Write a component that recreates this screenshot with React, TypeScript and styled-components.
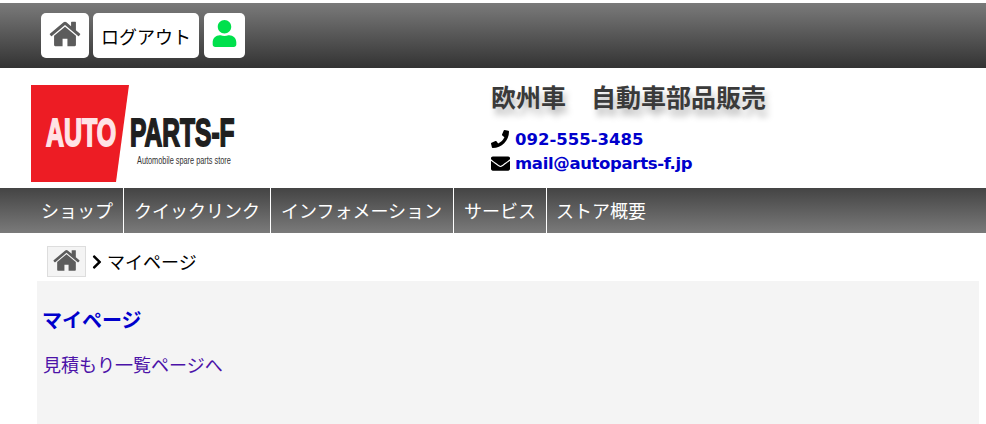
import React from "react";
import styled, { createGlobalStyle } from "styled-components";
import { FaUser, FaPhone, FaEnvelope, FaChevronRight } from "react-icons/fa";

const Global = createGlobalStyle`
  html, body { margin: 0; padding: 0; background: #fff; overflow: hidden; }
  body { font-family: "Noto Sans CJK JP", "Liberation Sans", sans-serif; color: #000; }
`;

const Page = styled.div`
  width: 986px;
  height: 424px;
  padding-top: 3px;
  box-sizing: border-box;
  overflow: hidden;
`;

const TopBar = styled.div`
  height: 65px;
  box-sizing: border-box;
  padding: 10px 0 0 41px;
  display: flex;
  align-items: flex-start;
  gap: 4px;
  background: linear-gradient(#7a7a7a, #333333);
`;

const TopButton = styled.a<{ $w: number; $ml?: number; $pb?: number; $pt?: number }>`
  width: ${(p) => p.$w}px;
  height: 45px;
  box-sizing: border-box;
  margin-left: ${(p) => p.$ml ?? 0}px;
  padding-bottom: ${(p) => p.$pb ?? 0}px;
  padding-top: ${(p) => p.$pt ?? 0}px;
  background: #fff;
  border-radius: 5px;
  display: flex;
  align-items: center;
  justify-content: center;
  font-size: 18px;
  color: #000;
`;

const Header = styled.div`
  height: 120px;
  display: flex;
  align-items: flex-start;
`;

const LogoBox = styled.div`
  width: 491px;
  padding: 17px 0 0 31px;
  box-sizing: border-box;
  svg { display: block; }
`;

const Contact = styled.div`
  padding-top: 10px;
`;

const Title = styled.h2`
  margin: 0 0 13px;
  font-size: 25px;
  line-height: 36px;
  font-weight: 700;
  color: #3a3a3a;
  white-space: pre;
  text-shadow: 3px 7px 6px rgba(0, 0, 0, 0.25);
`;

const ContactRow = styled.div<{ $ls: number }>`
  display: flex;
  align-items: center;
  height: 24px;
  font-family: "DejaVu Sans", sans-serif;
  font-size: 16.5px;
  font-weight: 700;
  color: #0000cc;
  letter-spacing: ${(p) => p.$ls}px;
`;

const ContactIcon = styled.span`
  width: 24px;
  flex: none;
  display: flex;
  align-items: center;
  color: #000;
`;

const Nav = styled.nav`
  height: 45px;
  display: flex;
  background: linear-gradient(#444444, #7a7a7a);
`;

const NavItem = styled.a<{ $w: number; $pl: number }>`
  width: ${(p) => p.$w}px;
  box-sizing: border-box;
  padding-left: ${(p) => p.$pl}px;
  padding-bottom: 2px;
  border-right: 1px solid #fff;
  display: flex;
  align-items: center;
  color: #fff;
  font-size: 18px;
  white-space: nowrap;
  &:last-child { border-right: 0; }
`;

const Crumbs = styled.div`
  height: 48px;
  padding: 13px 0 0 47px;
  box-sizing: border-box;
  display: flex;
  align-items: flex-start;
  font-size: 18px;
`;

const CrumbHome = styled.a`
  width: 39px;
  height: 31px;
  box-sizing: border-box;
  background: #f4f4f4;
  border: 1px solid #ddd;
  display: flex;
  align-items: center;
  justify-content: center;
  padding-bottom: 2px;
`;

const CrumbSep = styled.span`
  display: flex;
  align-items: center;
  height: 31px;
  margin: 0 2px 0 3px;
`;

const CrumbText = styled.span`
  line-height: 31px;
`;

const Main = styled.main`
  margin: 0 7px 0 37px;
  height: 143px;
  background: #f4f4f4;
  padding: 0 5px;
`;

const Heading = styled.h1`
  margin: 0;
  padding-top: 23px;
  font-size: 20px;
  line-height: 32px;
  font-weight: 700;
  color: #0000cc;
`;

const QuoteLink = styled.a`
  display: block;
  margin: 14px 0 0 1px;
  font-size: 18px;
  line-height: 28px;
  color: #4b12a8;
`;

const HomeIcon = ({ size }: { size: number }) => (
  <svg width={size} height={size} viewBox="0 0 1792 1792" fill="#5c5c5c" aria-hidden="true">
    <path d="M1472 992v480q0 26-19 45t-45 19h-384v-384h-256v384h-384q-26 0-45-19t-19-45v-480q0-1 .5-3t.5-3l575-474 575 474q1 2 1 6zm223-69l-62 74q-8 9-21 11h-3q-13 0-21-7l-692-577-692 577q-12 8-24 7-13-2-21-11l-62-74q-8-10-7-23.5t11-21.5l719-599q32-26 76-26t76 26l244 204v-195q0-14 9-23t23-9h192q14 0 23 9t9 23v408l219 182q10 8 11 21.5t-7 23.5z" />
  </svg>
);

const Logo = () => (
  <svg width="210" height="98" viewBox="0 0 210 98" role="img" aria-label="AUTO PARTS-F">
    <polygon points="0,0 98,0 85,97 0,97" fill="#ed1c24" />
    <g fontFamily="'Liberation Sans', sans-serif" fontWeight="700" fontSize="39">
      <text transform="translate(15 61) scale(0.64 1)" fill="#ffe3e6" stroke="#ffe3e6" strokeWidth="1.8">AUTO</text>
      <text transform="translate(99 61) scale(0.63 1)" fill="#1f1f1f" stroke="#1f1f1f" strokeWidth="1.8">PARTS-F</text>
    </g>
    <text transform="translate(106 79) scale(0.735 1)" fontFamily="'Liberation Sans', sans-serif" fontSize="10" fill="#333">Automobile spare parts store</text>
  </svg>
);

export default function App() {
  return (
    <Page>
      <Global />
      <TopBar>
        <TopButton $w={48} $pb={4}><HomeIcon size={34} /></TopButton>
        <TopButton $w={106} $pt={1}>ログアウト</TopButton>
        <TopButton $w={41} $ml={1} $pb={5}><FaUser size={27} color="#00e04c" /></TopButton>
      </TopBar>
      <Header>
        <LogoBox><Logo /></LogoBox>
        <Contact>
          <Title>欧州車　自動車部品販売</Title>
          <ContactRow $ls={0}><ContactIcon><FaPhone size={18} /></ContactIcon>092-555-3485</ContactRow>
          <ContactRow $ls={-0.35}><ContactIcon><FaEnvelope size={19} /></ContactIcon>mail@autoparts-f.jp</ContactRow>
        </Contact>
      </Header>
      <Nav>
        <NavItem $w={124} $pl={41}>ショップ</NavItem>
        <NavItem $w={147} $pl={10}>クイックリンク</NavItem>
        <NavItem $w={183} $pl={10}>インフォメーション</NavItem>
        <NavItem $w={93} $pl={10}>サービス</NavItem>
        <NavItem $w={120} $pl={9}>ストア概要</NavItem>
      </Nav>
      <Crumbs>
        <CrumbHome><HomeIcon size={29} /></CrumbHome>
        <CrumbSep><FaChevronRight size={16} color="#000" /></CrumbSep>
        <CrumbText>マイページ</CrumbText>
      </Crumbs>
      <Main>
        <Heading>マイページ</Heading>
        <QuoteLink>見積もり一覧ページへ</QuoteLink>
      </Main>
    </Page>
  );
}
